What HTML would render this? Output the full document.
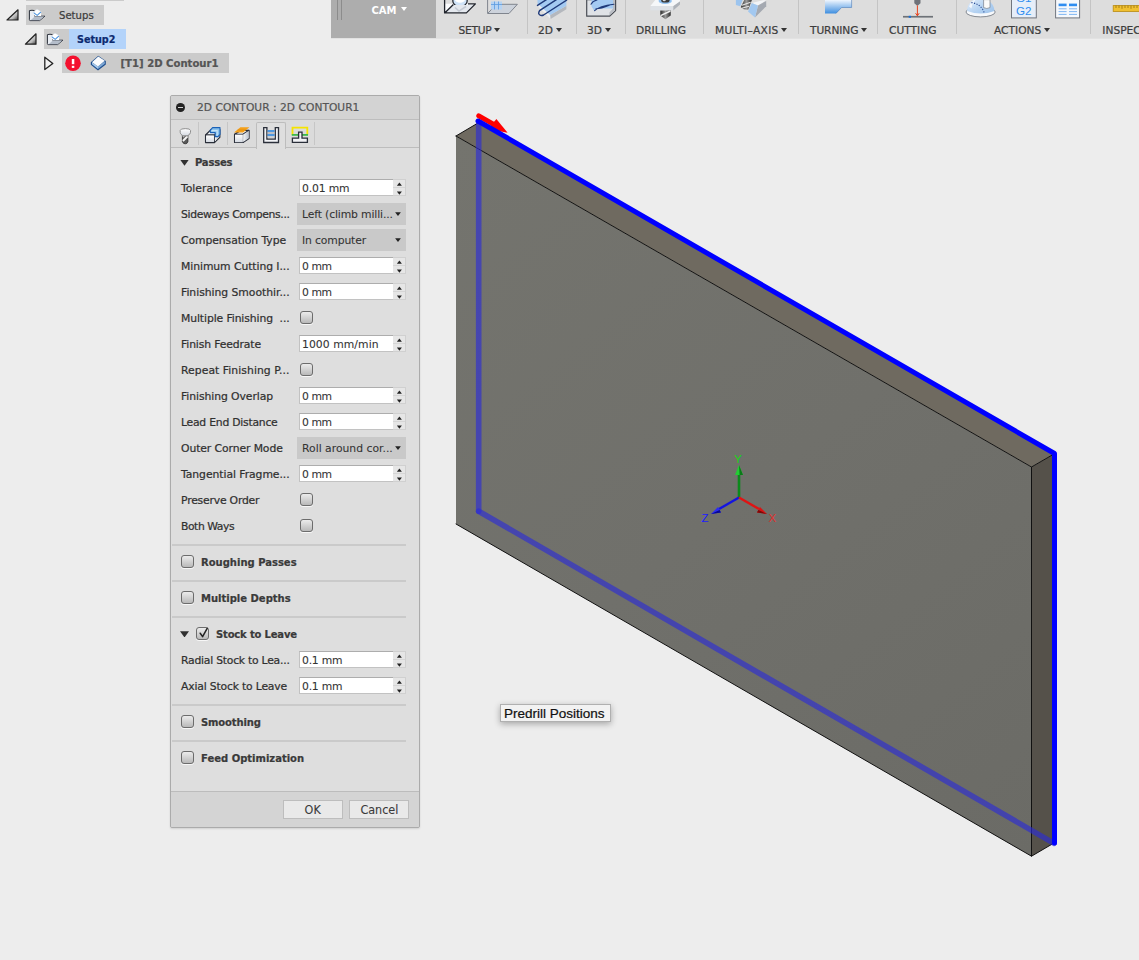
<!DOCTYPE html>
<html><head><meta charset="utf-8"><title>2D Contour</title>
<style>
html,body{margin:0;padding:0;background:#ededed;}
html{overflow:hidden}
body{width:1139px;height:960px;overflow:hidden;position:relative;font-family:"DejaVu Sans","Liberation Sans",sans-serif;font-size:10.8px;color:#333;-webkit-text-stroke:.22px currentColor;}
.abs{position:absolute}
/* toolbar */
#tb{position:absolute;left:331px;top:0;width:808px;height:38px;overflow:hidden;background:#dddddd;border-bottom:1px solid #e2e2e2}
#cam{position:absolute;left:0;top:0;width:105px;height:38px;background:#adadad;border-bottom:1px solid #bfbfbf}
#cam .grip{position:absolute;left:6px;top:0;width:1px;height:20px;background:#8c8c8c;box-shadow:4px 0 0 #8c8c8c}
#cam b{position:absolute;left:40.5px;top:4px;color:#fff;font-size:10px;font-weight:bold;line-height:14px;-webkit-text-stroke:0}
.tl{position:absolute;top:23.5px;font-size:10.67px;color:#3c3c3c;white-space:nowrap;line-height:14px}
.tsep{position:absolute;top:0;width:1px;height:34px;background:#c4c4c4}
.car{display:inline-block;width:0;height:0;border-left:3px solid transparent;border-right:3px solid transparent;border-top:4px solid #333;vertical-align:middle;margin-left:3px;position:relative;top:-1px}
/* tree */
.trow{position:absolute;height:20px;background:#cbcbcb}
.ttxt{position:absolute;font-size:12px;line-height:20px;white-space:nowrap;color:#3a3a3a}
/* dialog */
#dlg{position:absolute;left:170px;top:95px;width:248px;height:731px;background:#dedede;border:1px solid #ababab;border-radius:2px;box-shadow:0 1px 2px rgba(0,0,0,.12)}
#ttl{position:absolute;left:171px;top:96px;width:248px;height:23px;background:#d3d3d3;border-bottom:1px solid #bdbdbd;border-radius:2px 2px 0 0}
#ttl span{position:absolute;left:26px;top:4px;font-size:10.67px;letter-spacing:.03px;color:#555;line-height:15px;white-space:nowrap}
#ttl i{position:absolute;left:5px;top:7px;width:9px;height:9px;border-radius:50%;background:#222}
#ttl i:after{content:"";position:absolute;left:2px;top:4px;width:5px;height:1.4px;background:#d3d3d3}
#tabs{position:absolute;left:171px;top:120px;width:248px;height:27px;border-bottom:1px solid #bdbdbd;background:#dbdbdb}
.tabsep{position:absolute;top:122px;width:1px;height:23px;background:#c6c6c6}
#atab{position:absolute;left:256px;top:122px;width:28px;height:26px;background:#dedede;border:1px solid #bdbdbd;border-bottom:none;border-radius:2px 2px 0 0}
.lbl{position:absolute;left:181px;height:20px;line-height:20px;white-space:nowrap;font-size:10.8px;color:#303030;margin-top:.5px}
.hdr{position:absolute;height:20px;line-height:20px;white-space:nowrap;font-size:10px;font-weight:bold;color:#3a3a3a;}
.inp{position:absolute;left:299px;width:93px;height:15px;background:#fff;border:1px solid #c2c2c2;border-top-color:#adadad;border-right:none;box-sizing:content-box}
.inp span{position:absolute;left:2px;top:-1.5px;line-height:20px;font-size:10.8px;color:#333;white-space:nowrap;-webkit-text-stroke:.08px #333}
.spin{position:absolute;left:393px;width:12px;height:15px;background:#e6e6e6;border:1px solid #d0d0d0;border-left:none}
.spin .up{position:absolute;left:3.9px;top:2.4px;width:5px;height:3.4px;background:#222;clip-path:polygon(50% 0,100% 100%,0 100%)}
.spin .dn{position:absolute;left:3.9px;top:11.4px;width:5px;height:3.4px;background:#222;clip-path:polygon(0 0,100% 0,50% 100%)}
.spin:after{content:"";position:absolute;left:0;top:7px;width:12px;height:1px;background:#d6d6d6}
.sel{position:absolute;left:297px;width:109px;height:22px;background:#c9c9c9}
.sel span{position:absolute;left:5px;top:1.5px;line-height:20px;font-size:10.8px;color:#333;white-space:nowrap;-webkit-text-stroke:.08px #333}
.sel .dn{position:absolute;left:98.1px;top:9.2px;width:5.8px;height:3.8px;background:#222;clip-path:polygon(0 0,100% 0,50% 100%)}
.cb{position:absolute;width:11px;height:11px;border:1px solid #6c6c6c;border-radius:3px;background:linear-gradient(#ececec,#b9b9b9);box-shadow:0 1px 0 rgba(255,255,255,.75)}
.sep{position:absolute;left:172px;width:234px;height:2px;background:#cacaca}
.tri{position:absolute;width:9px;height:6.2px;background:#303030;clip-path:polygon(0 0,100% 0,50% 100%)}
#foot{position:absolute;left:171px;top:791px;width:248px;height:35px;background:#d4d4d4;border-top:1px solid #bcbcbc;border-radius:0 0 2px 2px}
.btn{position:absolute;top:800px;height:17px;border:1px solid #bdbdbd;background:#e9e9e9;text-align:center;line-height:19px;font-size:12px;color:#3a3a3a;-webkit-text-stroke:.1px #3a3a3a}
.btn span{display:inline-block;transform:scaleX(.93)}
#tip{position:absolute;left:500px;top:704px;width:109px;height:15.5px;border:1px solid #b0b0b0;background:#f2f2f2;box-shadow:0 2px 6px rgba(0,0,0,.30);font-family:"Liberation Sans",sans-serif;font-size:13.5px;line-height:17px;color:#111;white-space:nowrap}
#tip span{position:absolute;left:3px;top:0}
</style></head><body>
<svg class="abs" style="left:0;top:0" width="1139" height="960" viewBox="0 0 1139 960">
<defs>
<linearGradient id="gf" gradientUnits="userSpaceOnUse" x1="456" y1="136" x2="1031" y2="856"><stop offset="0" stop-color="#74746e"/><stop offset=".5" stop-color="#70706b"/><stop offset="1" stop-color="#6b6b66"/></linearGradient>
</defs>
<!-- box -->
<polygon points="456,136 1031.5,467 1031.5,856.2 456,524" fill="url(#gf)"/>
<polygon points="456,136 478,123 1054,454 1031.5,467" fill="#6f6a60"/>
<polygon points="1031.5,467 1054,454 1054,843 1031.5,856.2" fill="#55514a"/>
<g stroke="#111" stroke-width="1" fill="none" stroke-linecap="round">
<path d="M456,136 L1031.5,467 L1031.5,856.2 L456,524"/>
<path d="M456,136 L478,123"/>
<path d="M1031.5,467 L1054,454"/>
<path d="M1031.5,856.2 L1054,843"/>
</g>
<!-- hidden blue -->
<path d="M478.7,123 L478.7,511.2" stroke="#2a2ad8" stroke-opacity=".62" stroke-width="5.6" fill="none" stroke-linecap="round"/>
<path d="M478.7,511.2 L1054,843.3" stroke="#2a2ad8" stroke-opacity=".62" stroke-width="5.6" fill="none" stroke-linecap="round"/>
<!-- red arrow -->
<path d="M478.8,115.8 L495,125.2" stroke="#ff0000" stroke-width="5" stroke-linecap="round"/>
<polygon points="496.4,119 507.6,132.8 488,129" fill="#ff0000"/>
<!-- visible blue -->
<path d="M478,121 L1054.5,453.5 L1054.5,843" stroke="#0000ff" stroke-width="5" fill="none" stroke-linejoin="round" stroke-linecap="round"/>
<!-- triad -->
<g>
<line x1="739" y1="497.5" x2="739" y2="472" stroke="#0c8a1c" stroke-width="2.6"/>
<polygon points="739,465 735,475 743,475" fill="#22cc33"/><polygon points="739,465 739.6,475 743,475" fill="#0a7a18"/>
<line x1="739" y1="497.5" x2="719" y2="509" stroke="#1414e0" stroke-width="2.4"/>
<polygon points="711,514 718,507 721,512.5" fill="#2a2af4"/><polygon points="711,514 719.6,510 721,512.5" fill="#0a0a90"/>
<line x1="739" y1="497.5" x2="759" y2="509" stroke="#e01414" stroke-width="2.4"/>
<polygon points="767,514 757,512.5 760,507" fill="#d81414"/><polygon points="767,514 757,512.5 758.4,510" fill="#7a0a0a"/>
<text x="734.3" y="462.8" font-family="Liberation Sans, sans-serif" font-size="11.5" fill="#19d419">Y</text>
<text x="701.5" y="522" font-family="Liberation Sans, sans-serif" font-size="11.5" fill="#1c1cff">Z</text>
<text x="768.5" y="522" font-family="Liberation Sans, sans-serif" font-size="11.5" fill="#e03030">X</text>
</g>
</svg>
<!-- toolbar -->
<div id="tb">
<div id="cam"><div class="grip"></div><b>CAM</b><i class="car" style="position:absolute;left:69.5px;top:7px;border-top-color:#fff;margin:0"></i></div>
<div class="tsep" style="left:196px"></div>
<div class="tsep" style="left:245px"></div>
<div class="tsep" style="left:294px"></div>
<div class="tsep" style="left:372px"></div>
<div class="tsep" style="left:467px"></div>
<div class="tsep" style="left:546px"></div>
<div class="tsep" style="left:625px"></div>
<div class="tsep" style="left:759px"></div>
<div class="tl" style="left:127.6px;letter-spacing:-.3px">SETUP<i class="car"></i></div>
<div class="tl" style="left:207px">2D<i class="car"></i></div>
<div class="tl" style="left:256px">3D<i class="car"></i></div>
<div class="tl" style="left:305px">DRILLING</div>
<div class="tl" style="left:384px;letter-spacing:.27px">MULTI–AXIS<i class="car" style="margin-left:2px"></i></div>
<div class="tl" style="left:479px;letter-spacing:-.1px">TURNING<i class="car"></i></div>
<div class="tl" style="left:558px">CUTTING</div>
<div class="tl" style="left:663px">ACTIONS<i class="car"></i></div>
<div class="tl" style="left:771.3px">INSPECT</div>
</div>
<svg class="abs" style="left:436px;top:0" width="703" height="22" viewBox="436 -0.6 703 22">
<defs>
<linearGradient id="bl" x1="0" y1="0" x2="0" y2="1"><stop offset="0" stop-color="#f4f9ff"/><stop offset="1" stop-color="#3f8fe0"/></linearGradient>
<linearGradient id="dome" x1="0" y1="0" x2="1" y2="1"><stop offset="0" stop-color="#e9f2fc"/><stop offset=".6" stop-color="#b4d2f2"/><stop offset="1" stop-color="#9cc2ea"/></linearGradient>
<linearGradient id="bit" x1="0" y1="0" x2="1" y2="0"><stop offset="0" stop-color="#2a2a2a"/><stop offset=".5" stop-color="#9a9a9a"/><stop offset="1" stop-color="#2a2a2a"/></linearGradient>
</defs>
<g transform="translate(0,0.9)">
<!-- setup 1 -->
<path d="M444.6,-2 L444.6,11.4 L466.2,11.4 L475.4,2.2 L444.6,2.2" fill="#fbfcfe" stroke="none"/>
<ellipse cx="460" cy="-0.4" rx="7.2" ry="5.4" fill="#cfe3f8" stroke="#20242c" stroke-width="1.2"/>
<ellipse cx="460" cy="-2" rx="5" ry="3.2" fill="#ffffff"/>
<path d="M446,11 L453.4,3.4 L474,3.4 L466.4,11 Z" fill="#e4e8ee"/>
<path d="M455,6 L459,9.6 L466,5" fill="none" stroke="#c4cad4" stroke-width="1.6"/>
<path d="M444.6,-2 L444.6,11.4 L466.4,11.4 L475.4,2.4 L468,2.4 M453.4,3 L445,11.2" fill="none" stroke="#20242c" stroke-width="1.3" stroke-linejoin="round"/>
<!-- setup 2 -->
<path d="M487.6,-2 L487.6,12 L509,12 L517.4,2.8 L496.4,2.8 L488,11.6" fill="#ccd2db" stroke="#80858e" stroke-width="1" stroke-linejoin="round"/>
<path d="M491,0 L491,8 L502,8 L502,0 Z" fill="#b5d3f3"/>
<path d="M494.5,0 L494.5,8 M498.5,0 L498.5,8 M491,3 L502,3" stroke="#5a9be0" stroke-width=".8"/>
</g>
<!-- 2D -->
<path d="M537.5,3 L538.8,6.4 L550.6,18.3 L550.2,14.4 Z" fill="#eceef1"/>
<path d="M550.2,14.4 L566.4,5.1 L566.4,8.6 L550.6,18.3 Z" fill="#b4b8be"/>
<path d="M537.5,-1 L537.5,3 L550.2,14.4 L566.4,5.1 L566.4,-1 Z" fill="#a4caf2"/>
<path d="M546.4,-1 L537.5,4.8 M556.4,-1 L539.6,10 Q537.4,13.6 540.6,14.8 Q542.4,15 543.6,14.4 L566.6,-0.4" fill="none" stroke="#1f3a7a" stroke-width="1.4" stroke-linecap="round"/>
<!-- 3D -->
<path d="M586.7,-1 L586.7,15.6 L609.5,15.6 L615.6,10 L615.6,-1 Z" fill="#dfe2e6" stroke="#4a4e55" stroke-width="1.2" stroke-linejoin="round"/>
<path d="M613,-1 L615,-1 L615,9.6 L609.4,15 L609.4,12 L613,8 Z" fill="#b9bdc4"/>
<path d="M591.5,-1 L613,-1 L613,8 L597,8 L594.4,10.4 L591.5,6 Z" fill="#a4caf2"/>
<path d="M591,3.6 Q592.6,0.4 597,-0.6 M594.6,10 Q599,5.4 614,3.6 M596,8.2 Q601,8 609.4,4.6" fill="none" stroke="#1f3a7a" stroke-width="1.1" stroke-linecap="round"/>
<!-- drilling -->
<path d="M660.3,9.6 L660.3,15 L665.4,18.6 L670.7,15 L670.7,9.6 Z" fill="url(#bit)"/>
<path d="M660.6,15 L670.4,10.4" stroke="#f0f0f0" stroke-width="1.5"/>
<path d="M673.2,5.5 L680,0.4 L680,3.8 L673.2,9.8 Z" fill="#aeb3ba"/>
<path d="M650.4,5.5 L673.2,5.5 L673.2,9.8 L650.4,9.8 Z" fill="#dde1e6"/>
<path d="M650.4,5.5 L655.6,-1 L680,-1 L680,0.6 L673.2,5.5 Z" fill="#f5f7f9"/>
<ellipse cx="665.2" cy="0.4" rx="6.6" ry="3" fill="#8fc0f0"/>
<ellipse cx="665.4" cy="-0.2" rx="4.2" ry="2.2" fill="#3a3a3a"/>
<ellipse cx="664.2" cy="-0.6" rx="1.6" ry="1.2" fill="#d8d8d8"/>
<!-- multi-axis -->
<path d="M735.9,-1 L742.8,-1 L740.2,5.6 L735.9,4.3 Z" fill="#9cc4ee"/>
<path d="M751.8,2.5 L763,-0.4 L766.2,-0.4 L758,5 Z" fill="#f2f4f7"/>
<path d="M758,5 L766.2,0.4 L766.2,5.6 L755,16.8 Z" fill="#a4a9b1"/>
<path d="M751.8,2.5 L758,5 L755,16.8 L748,11 Z" fill="#a2c8f0"/>
<path d="M744.4,-1 L752,-1 L748.4,9 Q744.4,9.6 740.8,6.6 Z" fill="url(#bit)"/>
<path d="M742,4.6 L750.6,1.6 M741.6,7.6 L749,5.6" stroke="#e4e4e4" stroke-width="1.1"/>
<!-- turning -->
<path d="M825,-1 L851.6,-1 L851.6,6.9 L841.6,6.9 L836,12.8 L825,12.8 Z" fill="url(#bl)"/>
<path d="M851.6,-1 L851.6,6.9 L841.6,6.9 L836,12.8" fill="none" stroke="#3a6fb0" stroke-width=".5"/>
<!-- cutting -->
<path d="M914.3,-1 L920.5,-1 L920.5,2.6 L917.9,4.8 L916.9,4.8 L914.3,2.6 Z" fill="#6e7279"/>
<path d="M917.4,4.8 L917.4,15.2 M915.6,12.6 L917.4,15.2 L919.2,12.6" fill="none" stroke="#e8401a" stroke-width="1"/>
<rect x="903" y="15.3" width="30" height="1.7" fill="#6e7278"/>
<rect x="908.7" y="15.2" width="2.3" height="2" fill="#1a6fd8"/>
<!-- dome -->
<ellipse cx="980.6" cy="11.4" rx="14.6" ry="4.9" fill="#f6f8fb" stroke="#6a7078" stroke-width=".8"/>
<path d="M967,10.4 Q967.4,0 980,-4 Q994,0 994.4,10.4 Q981,15.4 967,10.4 Z" fill="url(#dome)"/>
<path d="M969,6 Q971,0 977,-2 Q972,2 971.4,8 Z" fill="#ffffff" fill-opacity=".75"/>
<path d="M971.4,2 Q979,3 982.6,8.6 Q984,10.6 984,12.4" fill="none" stroke="#1f3f8a" stroke-width="1.1" stroke-dasharray="1.1 1.5"/>
<path d="M983.6,-1 L983.6,7 Q986.8,8.8 990,7 L990,-1 Z" fill="#fafafa" stroke="#7a8088" stroke-width=".7"/>
<!-- G2 -->
<rect x="1011.5" y="-4" width="24.8" height="21.3" fill="#e6eef9" stroke="#70757e" stroke-width="1"/>
<text x="1016" y="1.2" font-family="Liberation Sans, sans-serif" font-size="11.6" fill="#2f8df0">G1</text>
<text x="1016" y="14.5" font-family="Liberation Sans, sans-serif" font-size="11.6" fill="#2f8df0">G2</text>
<!-- list -->
<rect x="1055.6" y="-4" width="24" height="21.3" fill="#f5f8fc" stroke="#70757e" stroke-width="1"/>
<rect x="1058.6" y="3" width="8" height="2.6" fill="#2f8df0"/><rect x="1069" y="3" width="8" height="2.6" fill="#2f8df0"/>
<path d="M1058.6,8.2 h8 M1069,8.2 h8 M1058.6,11 h8 M1069,11 h8 M1058.6,13.8 h8 M1069,13.8 h8" stroke="#7fb6f2" stroke-width="1"/>
<!-- ruler -->
<rect x="1113.2" y="5" width="30" height="5.8" fill="#f0c030" stroke="#b88a10" stroke-width=".8"/>
<path d="M1116,5 v2.4 M1119,5 v2.4 M1122,5 v3.2 M1125,5 v2.4 M1128,5 v2.4 M1131,5 v3.2 M1134,5 v2.4 M1137,5 v2.4" stroke="#8a6408" stroke-width=".7"/>
</svg>

<!-- tree -->
<div class="abs" style="left:26px;top:0;width:98px;height:1px;background:#cbcbcb"></div>
<div class="trow" style="left:26px;top:5px;width:78px"></div>
<div class="trow" style="left:44px;top:29px;width:25px"></div>
<div class="trow" style="left:69px;top:29px;width:57px;background:#b3d3fa"></div>
<div class="trow" style="left:62px;top:53px;width:167px"></div>
<div class="ttxt" style="left:59px;top:5.5px;font-size:10.1px">Setups</div>
<div class="ttxt" style="left:77px;top:29.5px;font-weight:bold;color:#0c2a70;font-size:9.6px;letter-spacing:0">Setup2</div>
<div class="ttxt" style="left:120.5px;top:53.5px;font-weight:bold;color:#555;font-size:10.1px;letter-spacing:0">[T1] 2D Contour1</div>
<svg class="abs" style="left:0;top:0" width="240" height="80" viewBox="0 0 240 80">
<defs>
<linearGradient id="tg" x1="0.3" y1="0.3" x2="1" y2="1"><stop offset="0" stop-color="#f4f4f4"/><stop offset=".55" stop-color="#b8b8b8"/><stop offset="1" stop-color="#3a3a3a"/></linearGradient>
<g id="fold">
<path d="M0.4,1.6 L0.4,10.6 Q0.4,11.6 1.4,11.6 L10.6,11.6 L15.8,7.2 L5.6,7.2 L5.6,1.6 Q3,0.9 0.4,1.6 Z" fill="#e9edf3" stroke="#2a2f3a" stroke-width="1" stroke-linejoin="round"/>
<path d="M1.6,11.2 L5.8,7.5 L15.2,7.5 L10.6,11.2 Z" fill="#b4bdca"/>
<path d="M3.6,3.4 L8,0 L12.2,2.6 L12,7 L5.8,7 Z" fill="#ffffff"/>
<path d="M4.6,3.6 L8.2,6.4 L12,2.8" fill="none" stroke="#4a92dd" stroke-width="1.1"/>
<path d="M3.6,3.4 L8,0 L12.2,2.6" fill="none" stroke="#c9ced6" stroke-width=".5"/>
</g>
</defs>
<polygon points="7,20 18,20 18,9.8" fill="url(#tg)" stroke="#222" stroke-width="1.2" stroke-linejoin="round"/>
<polygon points="25.4,44.2 36,44.2 36,33.8" fill="url(#tg)" stroke="#222" stroke-width="1.2" stroke-linejoin="round"/>
<polygon points="44.8,57.2 44.8,69.6 52.8,63.4" fill="#f2f2f2" stroke="#222" stroke-width="1.3" stroke-linejoin="round"/>
<use href="#fold" x="29" y="9"/>
<use href="#fold" x="47" y="33"/>
<circle cx="73" cy="63.2" r="7.8" fill="#f4102e"/>
<rect x="71.8" y="59" width="2.5" height="5.2" fill="#fff"/><rect x="71.8" y="65.8" width="2.5" height="2.1" fill="#fff"/>
<!-- op icon -->
<path d="M90.8,62.2 L98.3,55.8 L105.8,61 L105.8,64.6 L98,70.4 L90.8,64.8 Z" fill="#1f4f8f"/>
<path d="M92,62.4 L98,66.6 L98,69 L92,64.2 Z" fill="#a9cdf0"/>
<path d="M98,66.6 L104.8,61.2 L104.8,63.8 L98,69 Z" fill="#7fa9d6"/>
<path d="M92,62.2 L98.3,56.4 L104.8,60.8 L98,66.4 Z" fill="#fbfcfe"/>
</svg>
<!-- dialog -->
<div id="dlg"></div>
<div id="ttl"><i></i><span>2D CONTOUR : 2D CONTOUR1</span></div>
<div id="tabs"></div>
<div class="tabsep" style="left:198px"></div>
<div class="tabsep" style="left:227px"></div>
<div class="tabsep" style="left:314px"></div>
<div id="atab"></div>
<svg class="abs" style="left:170px;top:118px" width="150" height="32" viewBox="0 0 150 32">
<defs>
<linearGradient id="wg" x1="0" y1="0" x2="0" y2="1"><stop offset="0" stop-color="#ffffff"/><stop offset="1" stop-color="#d5dae2"/></linearGradient>
<linearGradient id="wg2" x1="0" y1="0" x2="1" y2="0"><stop offset="0" stop-color="#f4f6f9"/><stop offset="1" stop-color="#b9c0cb"/></linearGradient>
</defs>
<!-- tool -->
<path d="M12.4,16.4 L12.4,23.6 Q13,25.8 15.2,25.8 Q17.4,25.8 17.9,23.6 L17.9,16.4 Z" fill="#5a5a5a" stroke="#2a2a2a" stroke-width=".8"/>
<path d="M12.9,23 L17.5,18.2" stroke="#f6f6f6" stroke-width="2"/>
<path d="M12.9,19.2 L15,17.2" stroke="#d0d0d0" stroke-width="1.1"/>
<path d="M10.2,12.4 Q10.2,10.6 15.3,10.6 Q20.5,10.6 20.5,12.4 L20.5,14.4 Q20.5,16 18.6,16.8 L17.9,17.8 L12.4,17.8 L11.8,16.8 Q10.2,16 10.2,14.4 Z" fill="url(#wg)" stroke="#8e8e8e" stroke-width="1"/>
<!-- box blue corner -->
<g stroke="#2a2f3a" stroke-width="1.3" stroke-linejoin="round">
<path d="M35.6,17 L41,11.6 L49.8,11.6 L49.8,19.2 L44.4,24.5 L35.6,24.5 Z" fill="#f4f6f9"/>
<path d="M35.6,17 L44.4,17 L44.4,24.5 M44.4,17 L49.8,11.6" fill="none"/>
</g>
<path d="M44.9,17.3 L49.3,12.9 L49.3,19 L44.9,23.6 Z" fill="url(#wg2)"/>
<path d="M36.1,17.5 L43.9,17.5 L43.9,24 L36.1,24 Z" fill="url(#wg)"/>
<path d="M40.3,12.2 L42.6,9.6 L50,9.6 L50,16.4 L48,18.6 L45.2,18.6 L45.2,14.6 L40.3,14.6 Z" fill="#8cc3ec" stroke="#1b62b8" stroke-width="1.1" stroke-linejoin="round"/>
<path d="M41.6,12.6 L47.2,12.6 L47.2,17.4" fill="none" stroke="#c4e2f7" stroke-width="1.2"/>
<!-- box orange top -->
<g stroke="#2a2f3a" stroke-width="1.3" stroke-linejoin="round">
<path d="M64.6,16.4 L70.6,12.4 L79,12.4 L79,20.4 L73,24.4 L64.6,24.4 Z" fill="#eef1f5"/>
<path d="M64.6,16.4 L73,16.4 L73,24.4 M73,16.4 L79,12.4" fill="none"/>
</g>
<path d="M73.2,16.6 L78.8,12.8 L78.8,20.2 L73.2,24 Z" fill="url(#wg2)"/>
<path d="M65,16.6 L72.8,16.6 L72.8,24.2 L65,24.2 Z" fill="url(#wg)"/>
<path d="M64,14.4 L70.4,9.2 L79.4,9.2 L73,14.4 Z" fill="#f5a01a"/>
<path d="M67.5,12 L76,12" stroke="#d98808" stroke-width=".6"/>
<!-- U passes -->
<path d="M93.7,9.7 L96.9,9.7 L96.9,21.1 L105.3,21.1 L105.3,9.7 L108.5,9.7 L108.5,24.5 L93.7,24.5 Z" fill="#f2f3f6" stroke="#2a2f3a" stroke-width="1.3" stroke-linejoin="miter"/>
<rect x="97.5" y="12.1" width="7" height="1.8" fill="#3f8fdf"/>
<rect x="97.5" y="14.1" width="7" height="1.8" fill="#b8bcc4"/>
<rect x="97.5" y="16.1" width="7" height="1.8" fill="#3f8fdf"/>
<rect x="97.5" y="18.1" width="7" height="1.6" fill="#c8ccd2"/>
<!-- linking -->
<path d="M122.5,17 L122.5,9.7 L137.3,9.7 L137.3,17" fill="none" stroke="#f5e400" stroke-width="1.8"/>
<rect x="121.8" y="16" width="16.2" height="1.8" fill="#3fb84a"/>
<path d="M122.4,20.2 L128.6,20.2 L128.6,14.2 L132,14.2 L132,20.2 L137.4,20.2 L137.4,24.4 L122.4,24.4 Z" fill="#f0f1f4" stroke="#2a2f3a" stroke-width="1.3" stroke-linejoin="miter"/>
</svg>

<div class="tri" style="left:180px;top:159.5px"></div>
<div class="hdr" style="left:195px;top:153px;letter-spacing:-0.2px">Passes</div>
<div class="lbl" style="top:178px;letter-spacing:0.0px">Tolerance</div>
<div class="inp" style="top:179px"><span style="letter-spacing:-0.159px">0.01 mm</span></div><div class="spin" style="top:179px"><i class="up"></i><i class="dn"></i></div>
<div class="lbl" style="top:204px;letter-spacing:-0.346px">Sideways Compens...</div>
<div class="sel" style="top:203px"><span style="letter-spacing:-0.136px">Left (climb milli...</span><i class="dn"></i></div>
<div class="lbl" style="top:230px;letter-spacing:-0.068px">Compensation Type</div>
<div class="sel" style="top:229px"><span style="letter-spacing:-0.139px">In computer</span><i class="dn"></i></div>
<div class="lbl" style="top:256px;letter-spacing:-0.067px">Minimum Cutting I...</div>
<div class="inp" style="top:257px"><span style="letter-spacing:-0.411px">0 mm</span></div><div class="spin" style="top:257px"><i class="up"></i><i class="dn"></i></div>
<div class="lbl" style="top:282px;letter-spacing:-0.032px">Finishing Smoothir...</div>
<div class="inp" style="top:283px"><span style="letter-spacing:-0.411px">0 mm</span></div><div class="spin" style="top:283px"><i class="up"></i><i class="dn"></i></div>
<div class="lbl" style="top:308px;letter-spacing:-0.101px">Multiple Finishing &nbsp;...</div>
<div class="cb" style="left:300px;top:311px"></div>
<div class="lbl" style="top:334px;letter-spacing:-0.131px">Finish Feedrate</div>
<div class="inp" style="top:335px"><span style="letter-spacing:0.059px">1000 mm/min</span></div><div class="spin" style="top:335px"><i class="up"></i><i class="dn"></i></div>
<div class="lbl" style="top:360px;letter-spacing:0.055px">Repeat Finishing P...</div>
<div class="cb" style="left:300px;top:363px"></div>
<div class="lbl" style="top:386px;letter-spacing:-0.077px">Finishing Overlap</div>
<div class="inp" style="top:387px"><span style="letter-spacing:-0.411px">0 mm</span></div><div class="spin" style="top:387px"><i class="up"></i><i class="dn"></i></div>
<div class="lbl" style="top:412px;letter-spacing:-0.237px">Lead End Distance</div>
<div class="inp" style="top:413px"><span style="letter-spacing:-0.411px">0 mm</span></div><div class="spin" style="top:413px"><i class="up"></i><i class="dn"></i></div>
<div class="lbl" style="top:438px;letter-spacing:-0.092px">Outer Corner Mode</div>
<div class="sel" style="top:437px"><span style="letter-spacing:0.003px">Roll around cor...</span><i class="dn"></i></div>
<div class="lbl" style="top:464px;letter-spacing:-0.054px">Tangential Fragme...</div>
<div class="inp" style="top:465px"><span style="letter-spacing:-0.411px">0 mm</span></div><div class="spin" style="top:465px"><i class="up"></i><i class="dn"></i></div>
<div class="lbl" style="top:490px;letter-spacing:-0.195px">Preserve Order</div>
<div class="cb" style="left:300px;top:493px"></div>
<div class="lbl" style="top:516px;letter-spacing:-0.449px">Both Ways</div>
<div class="cb" style="left:300px;top:519px"></div>
<div class="lbl" style="top:650px;letter-spacing:-0.234px">Radial Stock to Lea...</div>
<div class="inp" style="top:651px"><span style="letter-spacing:-0.223px">0.1 mm</span></div><div class="spin" style="top:651px"><i class="up"></i><i class="dn"></i></div>
<div class="lbl" style="top:676px;letter-spacing:-0.177px">Axial Stock to Leave</div>
<div class="inp" style="top:677px"><span style="letter-spacing:-0.223px">0.1 mm</span></div><div class="spin" style="top:677px"><i class="up"></i><i class="dn"></i></div>

<div class="sep" style="top:544px"></div>
<div class="cb" style="left:181px;top:555px"></div><div class="hdr" style="left:201px;top:553px">Roughing Passes</div>
<div class="sep" style="top:580px"></div>
<div class="cb" style="left:181px;top:591px"></div><div class="hdr" style="left:201px;top:589px">Multiple Depths</div>
<div class="sep" style="top:616px"></div>
<div class="tri" style="left:180px;top:631.2px"></div>
<div class="cb" style="left:196px;top:627px"></div>
<svg class="abs" style="left:196.6px;top:625px" width="16" height="16" viewBox="0 0 16 16"><path d="M3.2,8.2 L5.6,11.6 L10.2,3.4" stroke="#222" stroke-width="1.5" fill="none" stroke-linecap="round" stroke-linejoin="round"/></svg>
<div class="hdr" style="left:216px;top:625px;letter-spacing:-0.17px">Stock to Leave</div>
<div class="sep" style="top:704px"></div>
<div class="cb" style="left:181px;top:715px"></div><div class="hdr" style="left:201px;top:713px;letter-spacing:-0.14px">Smoothing</div>
<div class="sep" style="top:740px"></div>
<div class="cb" style="left:181px;top:751px"></div><div class="hdr" style="left:201px;top:749px">Feed Optimization</div>
<div id="foot"></div>
<div class="btn" style="left:283px;width:58px"><span>OK</span></div>
<div class="btn" style="left:349px;width:58px"><span>Cancel</span></div>
<div id="tip"><span>Predrill Positions</span></div>
</body></html>
